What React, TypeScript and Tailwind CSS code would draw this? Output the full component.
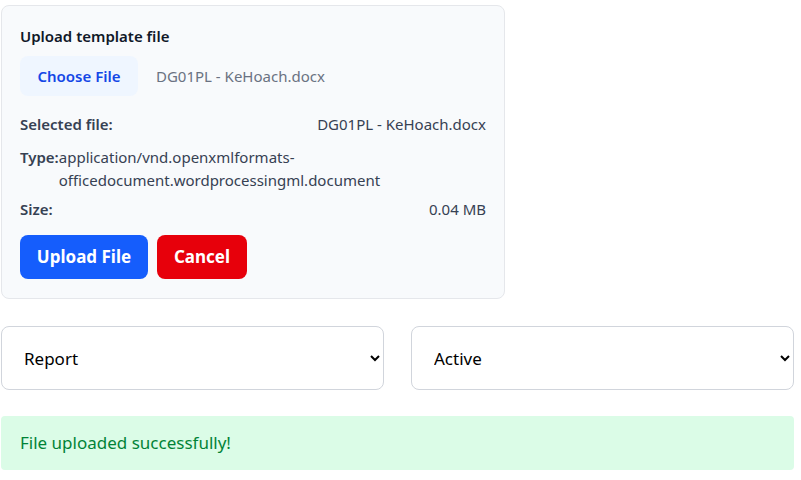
import React from 'react';

const font = { fontFamily: '"Noto Sans", "Open Sans", sans-serif' };

export default function App() {
  return (
    <div className="w-[801px] h-[480px] bg-white pl-px pt-[5px] text-gray-700" style={font}>
      <div className="w-[504px] rounded-lg border border-gray-200 bg-slate-50 px-[18px] pt-[20px] pb-[19px]">
        <h3 className="text-[15px] font-semibold text-gray-900 leading-5">Upload template file</h3>
        <div className="mt-[10px] flex items-center gap-[18px]">
          <button className="h-10 w-[118px] rounded-lg bg-blue-50 text-[15px] font-semibold text-blue-700">
            Choose File
          </button>
          <span className="text-[15px] text-gray-500">DG01PL - KeHoach.docx</span>
        </div>

        <div className="mt-[17px] flex flex-col text-[15px]">
          <div className="flex justify-between leading-[22px]">
            <span className="font-semibold">Selected file:</span>
            <span>DG01PL - KeHoach.docx</span>
          </div>
          <div className="mt-[11px] flex leading-[23px]">
            <span className="font-semibold">Type:</span>
            <span className="min-w-0 flex-1">application/vnd.openxmlformats-officedocument.wordprocessingml.document</span>
          </div>
          <div className="mt-[6px] flex justify-between leading-[22px]">
            <span className="font-semibold">Size:</span>
            <span>0.04 MB</span>
          </div>
        </div>

        <div className="mt-[15px] flex gap-[9px]">
          <button className="h-11 w-32 rounded-lg bg-blue-600 text-[17px] font-bold text-white">Upload File</button>
          <button className="h-11 w-[90px] rounded-lg bg-red-600 text-[17px] font-bold text-white">Cancel</button>
        </div>
      </div>

      <div className="mt-[27px] flex w-[793px] gap-[27px]">
        <select className="h-[64px] flex-1 rounded-lg border border-gray-300 bg-white px-[18px] text-[17px] text-black" style={font} defaultValue="report">
          <option value="report">Report</option>
        </select>
        <select className="h-[64px] flex-1 rounded-lg border border-gray-300 bg-white px-[18px] text-[17px] text-black" style={font} defaultValue="active">
          <option value="active">Active</option>
        </select>
      </div>

      <div className="mt-[26px] w-[793px] rounded bg-green-100 px-[19px] py-[15px] text-[17px] leading-6 text-green-700">
        File uploaded successfully!
      </div>
    </div>
  );
}
